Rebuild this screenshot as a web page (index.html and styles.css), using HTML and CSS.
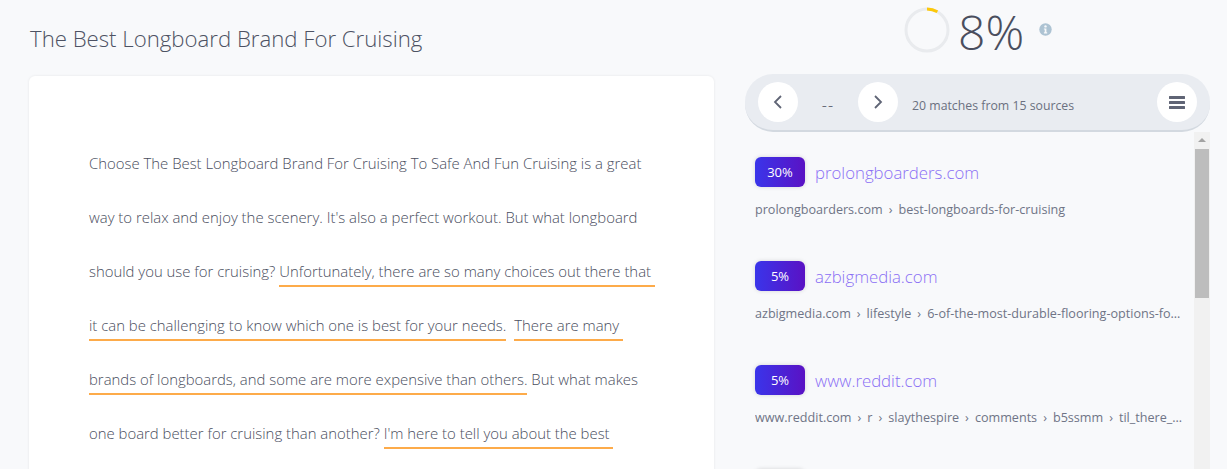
FILE: index.html
```html
<!DOCTYPE html>
<html lang="en">
<head>
    <meta charset="UTF-8">
    <meta name="viewport" content="width=device-width, initial-scale=1.0">
    <title>The Best Longboard Brand For Cruising</title>
    <link rel="stylesheet" href="styles.css">
</head>
<body>

<div class="page">
    <div class="left-col">
        <h1 class="doc-title">The Best Longboard Brand For Cruising</h1>
        <div class="doc-card">
            <p class="doc-text">
                Choose The Best Longboard Brand For Cruising To Safe And Fun Cruising is a great<br>
                way to relax and enjoy the scenery. It's also a perfect workout. But what longboard<br>
                should you use for cruising? <span class="match">Unfortunately, there are so many choices out there that&nbsp;</span><br>
                <span class="match">it can be challenging to know which one is best for your needs.</span> <span class="match gap">There are many&nbsp;</span><br>
                <span class="match">brands of longboards, and some are more expensive than others.</span> But what makes<br>
                one board better for cruising than another? <span class="match">I'm here to tell you about the best&nbsp;</span>
            </p>
        </div>
    </div>

    <div class="right-col">
        <div class="score">
            <svg class="ring" width="46" height="46" viewBox="0 0 46 46">
                <circle cx="23" cy="23" r="21" fill="none" stroke="#e9ebee" stroke-width="3"/>
                <path d="M23 2 A21 21 0 0 1 33.4 4.8" fill="none" stroke="#fcc80a" stroke-width="3"/>
            </svg>
            <span class="score-num">8%</span>
            <svg class="info" width="13" height="13" viewBox="0 0 13 13">
                <circle cx="6.5" cy="6.5" r="6.2" fill="#adc3d3"/>
                <circle cx="6.5" cy="3.4" r="1.2" fill="#f8f9fb"/>
                <path d="M4.9 5.4H7.4V9.3H8.2V10.4H4.9V9.3H5.7V6.5H4.9Z" fill="#f8f9fb"/>
            </svg>
        </div>

        <div class="toolbar">
            <button class="round-btn">
                <svg width="10" height="16" viewBox="0 0 10 16"><path d="M8 2L2 8L8 14" fill="none" stroke="#5f6475" stroke-width="1.8"/></svg>
            </button>
            <span class="counter">--</span>
            <button class="round-btn">
                <svg width="10" height="16" viewBox="0 0 10 16"><path d="M2 2L8 8L2 14" fill="none" stroke="#5f6475" stroke-width="1.8"/></svg>
            </button>
            <span class="match-count">20 matches from 15 sources</span>
            <button class="round-btn menu-btn">
                <svg width="16" height="13" viewBox="0 0 16 13"><path d="M1 0H15A1 1 0 0 1 15 3H1A1 1 0 0 1 1 0ZM1 5H15A1 1 0 0 1 15 8H1A1 1 0 0 1 1 5ZM1 10H15A1 1 0 0 1 15 13H1A1 1 0 0 1 1 10Z" fill="#5f6475"/></svg>
            </button>
        </div>

        <div class="sources-wrap">
            <div class="sources">
                <div class="source">
                    <div class="source-top">
                        <span class="badge">30%</span>
                        <a class="source-link">prolongboarders.com</a>
                    </div>
                    <div class="crumbs">prolongboarders.com<i>›</i>best-longboards-for-cruising</div>
                </div>
                <div class="source">
                    <div class="source-top">
                        <span class="badge">5%</span>
                        <a class="source-link">azbigmedia.com</a>
                    </div>
                    <div class="crumbs">azbigmedia.com<i>›</i>lifestyle<i>›</i>6-of-the-most-durable-flooring-options-for-your-home</div>
                </div>
                <div class="source">
                    <div class="source-top">
                        <span class="badge">5%</span>
                        <a class="source-link">www.reddit.com</a>
                    </div>
                    <div class="crumbs">www.reddit.com<i>›</i>r<i>›</i>slaythespire<i>›</i>comments<i>›</i>b5ssmm<i>›</i>til_there_are_more_combinations</div>
                </div>
                <div class="source">
                    <div class="source-top">
                        <span class="badge"></span>
                    </div>
                </div>
            </div>
            <div class="scrollbar">
                <span class="scroll-up"></span>
                <span class="scroll-thumb"></span>
            </div>
        </div>
    </div>
</div>

</body>
</html>
```

FILE: styles.css
```css
html, body {
    height: 100%;
    margin: 0;
    overflow: hidden;
}

body {
    font-family: "Open Sans", Arial, sans-serif;
    font-weight: 300;
    background-color: #f8f9fb;
    color: #4a4e5e;
}

.page {
    display: flex;
    height: 469px;
    overflow: hidden;
}

.left-col {
    width: 685px;
    margin-left: 29px;
    flex-shrink: 0;
}

.doc-title {
    margin: 22px 0 21px 1px;
    font-size: 22.2px;
    line-height: 33px;
    font-weight: 300;
    color: #4d5263;
}

.doc-card {
    background-color: white;
    border-radius: 6px;
    box-shadow: 0 0 3px rgba(0, 0, 0, 0.08);
    padding: 60px 60px 0 60px;
    height: 400px;
}

.doc-text {
    margin: 0;
    font-size: 14.9px;
    line-height: 54px;
    white-space: nowrap;
}

.match {
    padding-bottom: 4px;
    border-bottom: 2px solid #fdab4a;
}

.gap {
    margin-left: 4px;
}

.right-col {
    width: 465px;
    margin-left: 31px;
    flex-shrink: 0;
}

.score {
    display: flex;
    align-items: center;
    height: 60px;
    padding-left: 159px;
    margin-bottom: 14px;
}

.score-num {
    margin-left: 8px;
    font-size: 48px;
    line-height: 60px;
    padding-top: 4px;
    color: #4a4e5e;
}

.info {
    margin-left: 15px;
    margin-bottom: 2px;
}

.toolbar {
    display: flex;
    align-items: center;
    height: 56px;
    padding: 0 13px;
    background-color: #e9ecf1;
    border-radius: 28px;
    border-bottom: 2px solid #d3d9e0;
}

.round-btn {
    display: flex;
    align-items: center;
    justify-content: center;
    width: 40px;
    height: 40px;
    padding: 0;
    border: none;
    border-radius: 50%;
    background-color: white;
    flex-shrink: 0;
}

.counter {
    width: 60px;
    padding-top: 6px;
    text-align: center;
    font-size: 16px;
    letter-spacing: 1px;
}

.match-count {
    margin-left: 14px;
    padding-top: 7px;
    font-size: 12.3px;
    flex-grow: 1;
    color: #6b7080;
    font-weight: 400;
}

.sources-wrap {
    display: flex;
    height: 340px;
}

.sources {
    width: 449px;
    padding: 25px 0 0 10px;
    box-sizing: border-box;
}

.source {
    height: 104px;
}

.source-top {
    display: flex;
    align-items: center;
}

.badge {
    width: 50px;
    height: 30px;
    line-height: 31px;
    text-align: center;
    border-radius: 6px;
    background: linear-gradient(90deg, #3a35ea, #5a12c4);
    box-shadow: 0 0 4px rgba(0, 0, 0, 0.15);
    color: white;
    font-size: 13px;
    font-weight: 400;
}

.source-link {
    margin-left: 10px;
    font-size: 16.8px;
    color: #8a6ff5;
}

.crumbs {
    margin-top: 14px;
    width: 428px;
    font-size: 12.6px;
    line-height: 18px;
    color: #6f7486;
    font-weight: 400;
    white-space: nowrap;
    overflow: hidden;
    text-overflow: ellipsis;
}

.crumbs i {
    font-style: normal;
    margin: 0 6px;
}

.scrollbar {
    width: 16px;
    height: 340px;
    background-color: #f1f1f1;
    display: flex;
    flex-direction: column;
    align-items: center;
}

.scroll-up {
    margin-top: 6px;
    border-left: 4px solid transparent;
    border-right: 4px solid transparent;
    border-bottom: 4px solid #a3a3a3;
}

.scroll-thumb {
    margin-top: 7px;
    width: 14px;
    height: 149px;
    background-color: #bdbdbd;
}
```
